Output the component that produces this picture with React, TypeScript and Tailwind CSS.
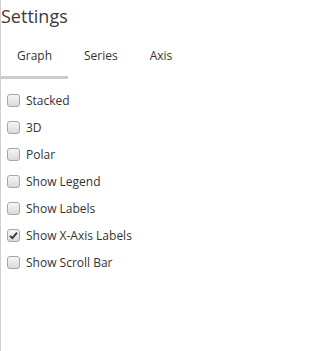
import { useState } from "react";

const tabs = ["Graph", "Series", "Axis"];

const options = [
  { label: "Stacked", checked: false },
  { label: "3D", checked: false },
  { label: "Polar", checked: false },
  { label: "Show Legend", checked: false },
  { label: "Show Labels", checked: false },
  { label: "Show X-Axis Labels", checked: true },
  { label: "Show Scroll Bar", checked: false },
];

const Checkbox = ({ checked, onToggle }: { checked: boolean; onToggle: () => void }) => (
  <span
    onClick={onToggle}
    className="flex h-[13px] w-[13px] shrink-0 items-center justify-center rounded-[3px] border border-[#a6a6a6] bg-gradient-to-b from-[#f6f6f6] to-[#dadada]"
  >
    {checked && (
      <svg width="9" height="9" viewBox="0 0 9 9">
        <path d="M1 4.8 L3.4 7.2 L8 1.6" fill="none" stroke="#3a3a3a" strokeWidth="1.9" />
      </svg>
    )}
  </span>
);

const App = () => {
  const [active, setActive] = useState(0);
  const [values, setValues] = useState(options.map((o) => o.checked));

  return (
    <div className="h-[351px] w-[293px] border-l border-[#d0d0d0] bg-white font-['Open_Sans',sans-serif] text-[#333]">
      <h1 className="pt-[4px] text-[18px] leading-[24px] text-[#3b3b3b]">Settings</h1>

      <div className="mt-[8px] flex">
        {tabs.map((tab, i) => (
          <button
            key={tab}
            type="button"
            onClick={() => setActive(i)}
            className={
              "border-b-[3px] px-4 py-[11px] text-[12px] leading-[18px] text-[#333] " +
              (active === i ? "border-[#cccccc]" : "border-transparent")
            }
          >
            {tab}
          </button>
        ))}
      </div>

      <div className="flex flex-col pt-[8px]">
        {options.map((o, i) => (
          <label key={o.label} className="flex h-[27px] items-center gap-[6px] pl-[6px] text-[12px] leading-[27px]">
            <Checkbox
              checked={values[i]}
              onToggle={() => setValues((v) => v.map((x, j) => (j === i ? !x : x)))}
            />
            {o.label}
          </label>
        ))}
      </div>
    </div>
  );
};

export default App;
